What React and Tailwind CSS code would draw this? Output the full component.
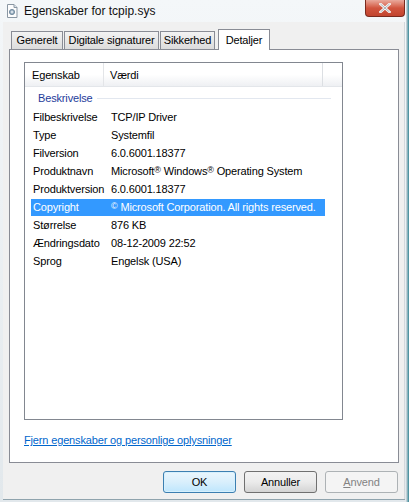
import React from 'react';

const rows = [
  { k: 'Filbeskrivelse', v: 'TCP/IP Driver' },
  { k: 'Type', v: 'Systemfil' },
  { k: 'Filversion', v: '6.0.6001.18377' },
  {
    k: 'Produktnavn',
    v: (
      <>
        Microsoft<span className="text-[9px] align-[2px]">®</span> Windows<span className="text-[9px] align-[2px]">®</span> Operating System
      </>
    ),
  },
  { k: 'Produktversion', v: '6.0.6001.18377' },
  {
    k: 'Copyright',
    v: (
      <>
        <span className="text-[9px] align-[2px]">©</span> Microsoft Corporation. All rights reserved.
      </>
    ),
    selected: true,
  },
  { k: 'Størrelse', v: '876 KB' },
  { k: 'Ændringsdato', v: '08-12-2009 22:52' },
  { k: 'Sprog', v: 'Engelsk (USA)' },
];

const tabs = [
  { label: 'Generelt', w: 'w-[52px]' },
  { label: 'Digitale signaturer', w: 'w-[95px]' },
  { label: 'Sikkerhed', w: 'w-[55px]' },
];

const FileIcon = () => (
  <svg width="12" height="14" viewBox="0 0 12 14">
    <path d="M1.5 0.5 H8 L11 3.5 V13.5 H1.5 Z" fill="#fdfdfd" stroke="#8a97a3" />
    <path d="M8 0.5 V3.5 H11" fill="#dfe5ea" stroke="#8a97a3" />
    <circle cx="6" cy="8" r="2.6" fill="#9fb3c3" stroke="#5f7a90" strokeWidth="0.8" />
    <circle cx="6" cy="8" r="1" fill="#e8eef3" />
  </svg>
);

export default function App() {
  return (
    <div
      className="w-[409px] h-[502px] relative overflow-hidden bg-gradient-to-b from-[#f4f7f9] to-[#e2e8ec] text-[11px] tracking-[-0.15px] text-black"
      style={{ fontFamily: '"Liberation Sans", Arial, sans-serif' }}
    >
      {/* title bar */}
      <div className="h-[22px] flex items-center pl-[6px] gap-[6px]">
        <FileIcon />
        <span className="text-[12px] tracking-normal text-[#111]">Egenskaber for tcpip.sys</span>
      </div>
      <div className="absolute top-0 right-[4px] w-[40px] h-[17px] rounded-b-[4px] border border-t-0 border-[#7a2a1e] bg-gradient-to-b from-[#e9a99c] via-[#d1553f] to-[#c2442e] flex items-center justify-center">
        <svg width="12" height="10" viewBox="0 0 12 10">
          <path d="M1.5 1 L10.5 9 M10.5 1 L1.5 9" stroke="#f4f4f4" strokeWidth="2.6" strokeLinecap="square" />
          <path d="M1.5 1 L10.5 9 M10.5 1 L1.5 9" stroke="#9aa2a8" strokeWidth="0.8" />
        </svg>
      </div>
      <div className="absolute top-0 bottom-0 right-0 w-[3px] bg-gradient-to-r from-[#d9dfe3] to-[#2f8696]" />

      {/* client area */}
      <div className="ml-[3px] mr-[4px] h-[477px] bg-[#f0f0f0] border-r border-[#d3d8dc] pt-[7px] px-[6px]">
        {/* tabs */}
        <div className="flex items-end h-[20px] pl-[2px] gap-[1px] relative z-10">
          {tabs.map((t) => (
            <div
              key={t.label}
              className={`${t.w} h-[18px] border border-b-0 border-[#898c95] bg-gradient-to-b from-[#f3f3f3] to-[#dcdcdc] flex items-center justify-center`}
            >
              {t.label}
            </div>
          ))}
          <div className="w-[52px] h-[21px] -mb-px ml-[2px] border border-b-0 border-[#898c95] bg-white flex items-start justify-center pt-[2px]">
            Detaljer
          </div>
        </div>

        {/* panel */}
        <div className="w-[390px] h-[414px] border border-[#898c95] bg-white pl-[14px] pt-[12px]">
          <div className="w-[319px] h-[358px] border border-[#828790] bg-white">
            <div className="h-[24px] flex border-b border-[#e3e6ea] bg-gradient-to-b from-white via-white to-[#eef0f3]">
              <div className="w-[79px] pl-[7px] pt-[2px] flex items-center border-r border-[#e3e5e8]">Egenskab</div>
              <div className="w-[219px] pl-[6px] pt-[2px] flex items-center border-r border-[#dcdfe3]">Værdi</div>
              <div className="flex-1" />
            </div>
            <div className="h-[22px] flex items-center pl-[13px] pr-[11px] gap-[4px]">
              <span className="text-[#1e3c9a]">Beskrivelse</span>
              <div className="flex-1 h-px bg-[#e2e7ef]" />
            </div>
            {rows.map((r) => (
              <div key={r.k} className="h-[18px] pl-[6px]">
                <div
                  className={`w-[294px] h-[17px] flex items-center ${r.selected ? 'bg-[#3399ff] text-white' : ''}`}
                >
                  <span className="w-[80px] pl-[2px] whitespace-nowrap">{r.k}</span>
                  <span className="whitespace-nowrap">{r.v}</span>
                </div>
              </div>
            ))}
          </div>
          <div className="mt-[12px]">
            <span className="text-[#0066cc] underline">Fjern egenskaber og personlige oplysninger</span>
          </div>
        </div>

        {/* buttons */}
        <div className="flex justify-end gap-[8px] mt-[8px]">
          <div className="w-[73px] h-[22px] rounded-[3px] border border-[#3c7fb1] bg-gradient-to-b from-[#eaf6fd] via-[#d9effc] to-[#bee6fd] flex items-center justify-center shadow-[inset_0_0_0_1px_#d6f0fd]">
            OK
          </div>
          <div className="w-[73px] h-[22px] rounded-[3px] border border-[#707070] bg-gradient-to-b from-[#f2f2f2] via-[#ebebeb] to-[#d4d4d4] flex items-center justify-center">
            Annuller
          </div>
          <div className="w-[73px] h-[22px] rounded-[3px] border border-[#adb2b5] bg-[#f4f4f4] text-[#838383] flex items-center justify-center">
            <span>
              <span className="underline">A</span>nvend
            </span>
          </div>
        </div>
      </div>
      <div className="ml-[3px] mr-[4px] h-px bg-[#8fa3ad]" />
    </div>
  );
}
